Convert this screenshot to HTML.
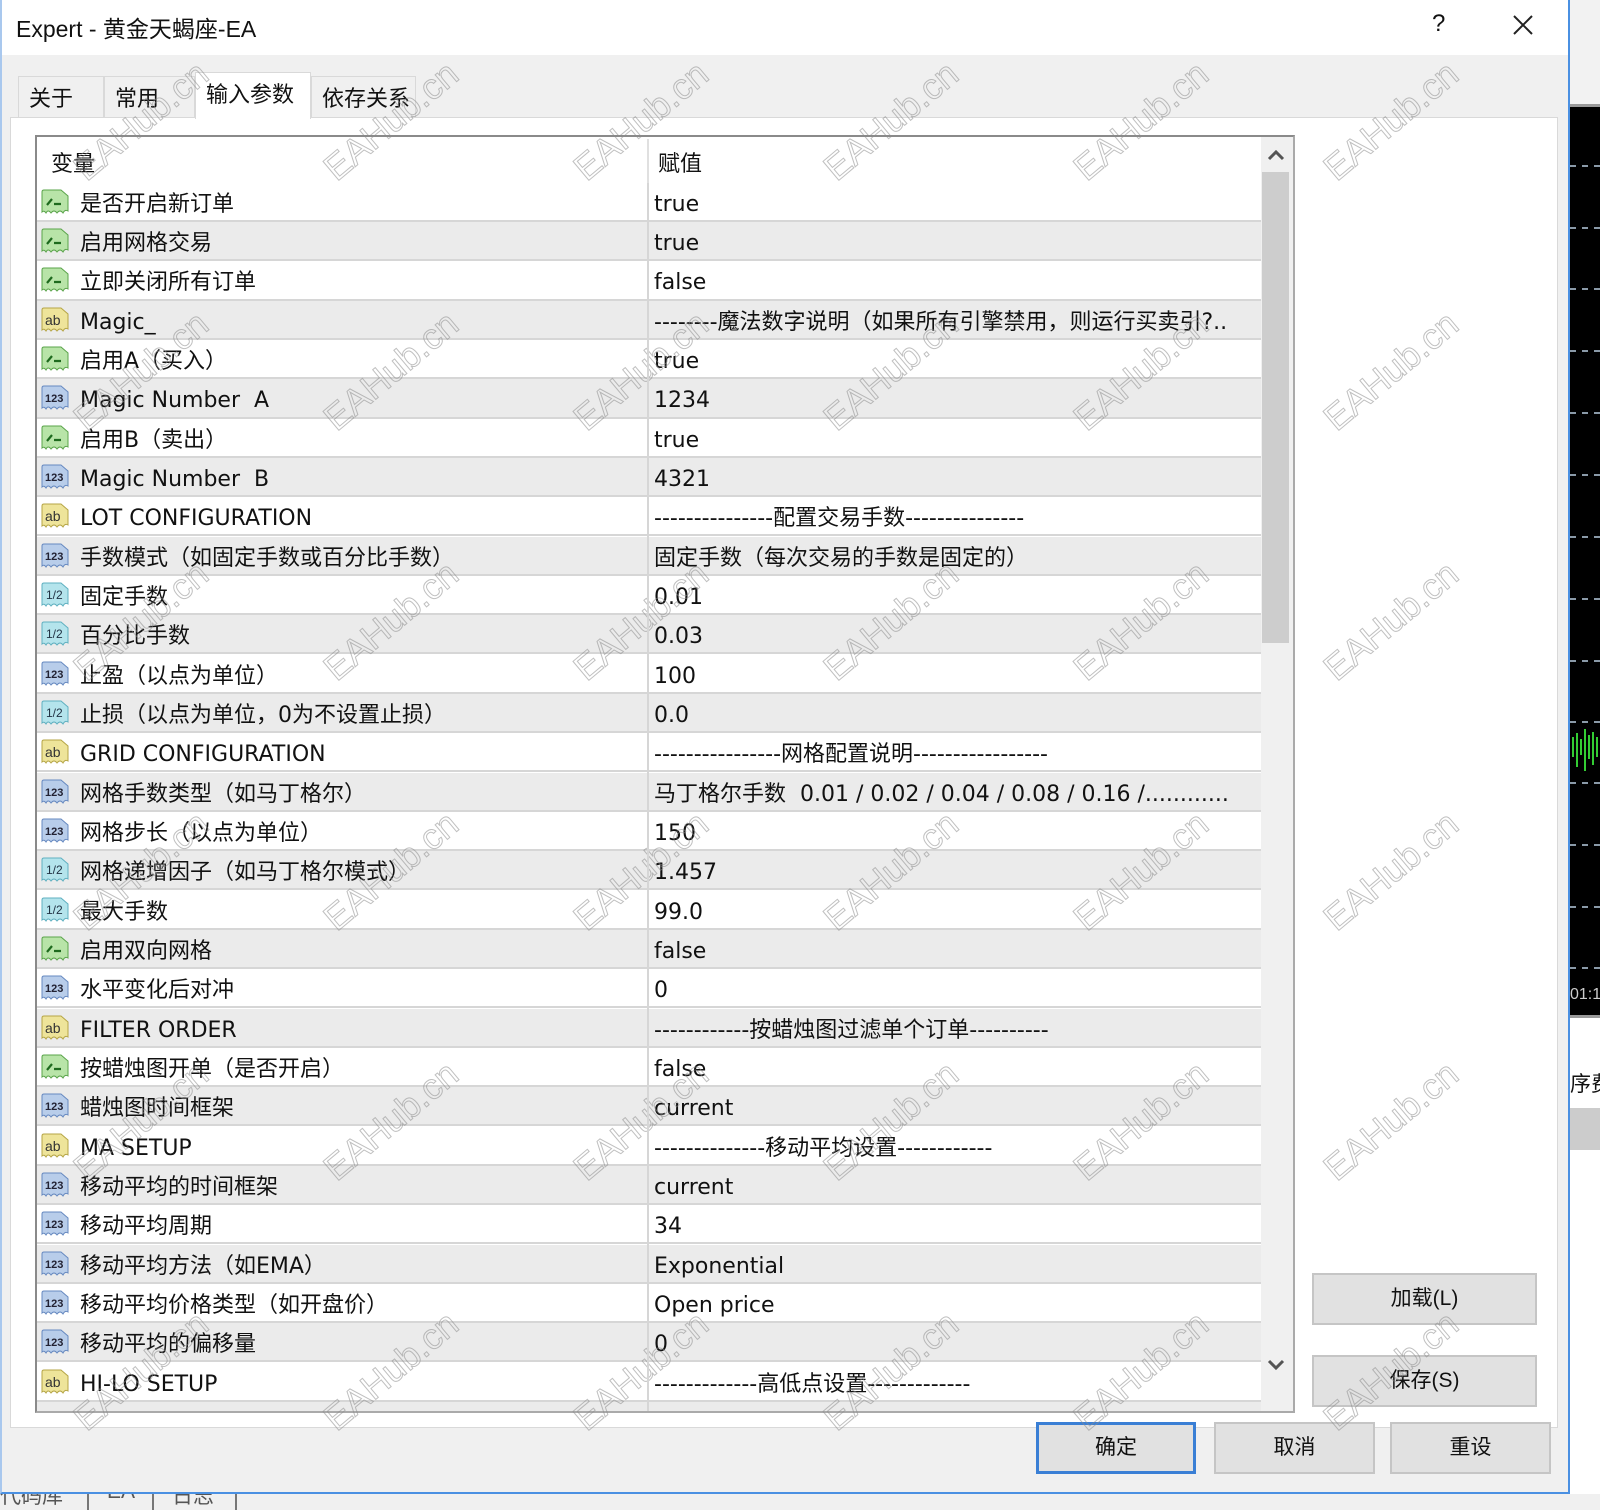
<!DOCTYPE html>
<html><head><meta charset="utf-8">
<style>
*{margin:0;padding:0;box-sizing:border-box}
html{overflow:hidden}
body{width:1600px;height:1510px;position:relative;overflow:hidden;background:#fff;font-family:"Liberation Sans","Noto Sans CJK SC",sans-serif;color:#111}
.a{position:absolute}
.tab{position:absolute;top:76px;height:42px;border:1px solid #d9d9d9;border-bottom:none;background:#f0f0f0;font-size:22px;padding:4px 0 0 10px}
.row{position:absolute;left:37px;width:1224px;height:39.33px;border-bottom:2px solid #d6d6d6;font-size:22px;font-family:"DejaVu Sans","Noto Sans CJK SC",sans-serif}
.row.g{background:#ebebeb}
.row .n,.row .v{position:absolute;top:6px;line-height:32px;height:32px;white-space:nowrap}
.row .n{left:43px}
.row .v{left:617px}
.row svg{position:absolute;left:4px;top:6px}
.wm{position:absolute;font:36px "Liberation Sans",sans-serif;color:transparent;-webkit-text-stroke:1px rgba(140,140,140,.55);transform:rotate(-40deg);white-space:nowrap}
.btn{position:absolute;background:#e1e1e1;border:2px solid #c5c5c5;font-size:21px;text-align:center}
</style></head><body>
<svg width="0" height="0" style="position:absolute">
<defs>
<path id="doc" d="M1 3 Q1 1 3 1 H20 L27 7 V22 Q24 20 22 24 Q19 20 16 24 Q13 20 10 24 Q7 20 5 24 Q3 21 1 23 Z"/>
</defs></svg>
<!-- right chart strip -->
<div class="a" style="left:1570px;top:0;width:30px;height:107px;background:#f2f2f2;border-bottom:3px solid #999"></div>
<div class="a" style="left:1570px;top:107px;width:30px;height:908px;background:#000"></div>
<div class="a" style="left:1570px;top:1015px;width:30px;height:3px;background:#999"></div>
<svg class="a" style="left:1570px;top:107px" width="30" height="908">
<g stroke="#8a9aa8" stroke-width="2" stroke-dasharray="6 6">
<line x1="0" y1="59" x2="30" y2="59"/><line x1="0" y1="121" x2="30" y2="121"/><line x1="0" y1="182" x2="30" y2="182"/><line x1="0" y1="244" x2="30" y2="244"/><line x1="0" y1="306" x2="30" y2="306"/><line x1="0" y1="368" x2="30" y2="368"/><line x1="0" y1="430" x2="30" y2="430"/><line x1="0" y1="492" x2="30" y2="492"/><line x1="0" y1="554" x2="30" y2="554"/><line x1="0" y1="615" x2="30" y2="615"/><line x1="0" y1="676" x2="30" y2="676"/><line x1="0" y1="738" x2="30" y2="738"/><line x1="0" y1="800" x2="30" y2="800"/><line x1="0" y1="861" x2="30" y2="861"/></g>
<g stroke="#3c3" stroke-width="2"><line x1="3" y1="630" x2="3" y2="650"/><line x1="7" y1="626" x2="7" y2="660"/><line x1="11" y1="632" x2="11" y2="648"/><line x1="15" y1="622" x2="15" y2="664"/><line x1="19" y1="628" x2="19" y2="652"/><line x1="23" y1="625" x2="23" y2="658"/><line x1="27" y1="630" x2="27" y2="650"/></g>
<text x="0" y="892" fill="#ccc" font-size="16" font-family="Liberation Sans">01:10</text>
</svg>
<div class="a" style="left:1570px;top:1068px;width:30px;height:30px;overflow:hidden;font-size:21px;white-space:nowrap">序费</div>
<div class="a" style="left:1570px;top:1108px;width:30px;height:42px;background:#ccc"></div>
<!-- bottom strip -->
<div class="a" style="left:0;top:1494px;width:1600px;height:16px;background:#f0f0f0;overflow:hidden">
<div class="a" style="left:0;top:-14px;font-size:21px;color:#555">代码库</div>
<div class="a" style="left:87px;top:0;width:2px;height:16px;background:#777"></div>
<div class="a" style="left:107px;top:-14px;font-size:21px;color:#555">EA</div>
<div class="a" style="left:152px;top:0;width:2px;height:16px;background:#777"></div>
<div class="a" style="left:172px;top:-14px;font-size:21px;color:#555">日志</div>
<div class="a" style="left:235px;top:0;width:2px;height:16px;background:#777"></div>
</div>
<!-- dialog -->
<div class="a" style="left:0;top:0;width:1570px;height:1494px;background:#f0f0f0;border-right:2px solid #4a90e2;border-bottom:2px solid #4a90e2;border-left:2px solid #a9c8ee"></div>
<div class="a" style="left:2px;top:0;width:1566px;height:55px;background:#fff"></div>
<div class="a" style="left:16px;top:10px;font-size:23px">Expert - 黄金天蝎座-EA</div>
<div class="a" style="left:1432px;top:10px;font-size:24px">?</div>
<svg class="a" style="left:1512px;top:14px" width="22" height="22"><path d="M2 2 L20 20 M20 2 L2 20" stroke="#222" stroke-width="2"/></svg>
<!-- tabs -->
<div class="tab" style="left:18px;width:86px">关于</div>
<div class="tab" style="left:104px;width:91px">常用</div>
<div class="tab" style="left:311px;width:105px">依存关系</div>
<div class="a" style="left:10px;top:117px;width:1548px;height:1311px;background:#fff;border:1px solid #d9d9d9"></div>
<div class="tab" style="left:195px;top:72px;width:116px;height:47px;background:#fff;border-color:#d9d9d9">输入参数</div>
<!-- table -->
<div class="a" style="left:35px;top:135px;width:1260px;height:1278px;border:2px solid #8a8a8a;border-right-color:#aaa;border-bottom-color:#aaa;background:#fff;overflow:hidden">
<div class="a" style="left:14px;top:9px;font-size:22px">变量</div>
<div class="a" style="left:610px;top:2px;width:2px;height:44px;background:#e0e0e0"></div>
<div class="a" style="left:621px;top:9px;font-size:22px">赋值</div>
<div class="a" style="left:610px;top:46px;width:2px;height:1240px;background:#d6d6d6;z-index:2"></div>
<div class="a" style="left:1224px;top:0;width:32px;height:1280px;background:#f0f0f0;z-index:3">
<svg class="a" style="left:6px;top:12px" width="18" height="12"><path d="M2 10 L9 3 L16 10" stroke="#555" stroke-width="3" fill="none"/></svg>
<div class="a" style="left:1px;top:35px;width:27px;height:471px;background:#cdcdcd"></div>
<svg class="a" style="left:6px;top:1222px" width="18" height="12"><path d="M2 2 L9 9 L16 2" stroke="#555" stroke-width="3" fill="none"/></svg>
</div>
<div class="a" style="left:-37px;top:-137px;width:1300px;height:1560px">
<div class="row" style="top:182.5px"><svg width="30" height="26"><use href="#doc" fill="#b8e4a8" stroke="#5aa44a"/><path d="M6 16 L11 10 M13 15 H20" stroke="#1e6a1e" stroke-width="2.2"/></svg><span class="n">是否开启新订单</span><span class="v">true</span></div>
<div class="row g" style="top:221.8px"><svg width="30" height="26"><use href="#doc" fill="#b8e4a8" stroke="#5aa44a"/><path d="M6 16 L11 10 M13 15 H20" stroke="#1e6a1e" stroke-width="2.2"/></svg><span class="n">启用网格交易</span><span class="v">true</span></div>
<div class="row" style="top:261.2px"><svg width="30" height="26"><use href="#doc" fill="#b8e4a8" stroke="#5aa44a"/><path d="M6 16 L11 10 M13 15 H20" stroke="#1e6a1e" stroke-width="2.2"/></svg><span class="n">立即关闭所有订单</span><span class="v">false</span></div>
<div class="row g" style="top:300.5px"><svg width="30" height="26"><use href="#doc" fill="#eee49a" stroke="#b5a545"/><text x="4" y="18" font-size="14" font-family="Liberation Sans" fill="#333">ab</text></svg><span class="n">Magic_</span><span class="v">--------魔法数字说明（如果所有引擎禁用，则运行买卖引?..</span></div>
<div class="row" style="top:339.8px"><svg width="30" height="26"><use href="#doc" fill="#b8e4a8" stroke="#5aa44a"/><path d="M6 16 L11 10 M13 15 H20" stroke="#1e6a1e" stroke-width="2.2"/></svg><span class="n">启用A（买入）</span><span class="v">true</span></div>
<div class="row g" style="top:379.2px"><svg width="30" height="26"><use href="#doc" fill="#b8cdea" stroke="#6689c0"/><text x="4" y="17" font-size="11" font-weight="bold" font-family="Liberation Sans" fill="#223">123</text></svg><span class="n">Magic Number&nbsp; A</span><span class="v">1234</span></div>
<div class="row" style="top:418.5px"><svg width="30" height="26"><use href="#doc" fill="#b8e4a8" stroke="#5aa44a"/><path d="M6 16 L11 10 M13 15 H20" stroke="#1e6a1e" stroke-width="2.2"/></svg><span class="n">启用B（卖出）</span><span class="v">true</span></div>
<div class="row g" style="top:457.8px"><svg width="30" height="26"><use href="#doc" fill="#b8cdea" stroke="#6689c0"/><text x="4" y="17" font-size="11" font-weight="bold" font-family="Liberation Sans" fill="#223">123</text></svg><span class="n">Magic Number&nbsp; B</span><span class="v">4321</span></div>
<div class="row" style="top:497.1px"><svg width="30" height="26"><use href="#doc" fill="#eee49a" stroke="#b5a545"/><text x="4" y="18" font-size="14" font-family="Liberation Sans" fill="#333">ab</text></svg><span class="n">LOT CONFIGURATION</span><span class="v">---------------配置交易手数---------------</span></div>
<div class="row g" style="top:536.5px"><svg width="30" height="26"><use href="#doc" fill="#b8cdea" stroke="#6689c0"/><text x="4" y="17" font-size="11" font-weight="bold" font-family="Liberation Sans" fill="#223">123</text></svg><span class="n">手数模式（如固定手数或百分比手数）</span><span class="v">固定手数（每次交易的手数是固定的）</span></div>
<div class="row" style="top:575.8px"><svg width="30" height="26"><use href="#doc" fill="#b4e4ec" stroke="#5fb0c0"/><text x="5" y="17" font-size="12" font-family="Liberation Sans" fill="#234">1/2</text></svg><span class="n">固定手数</span><span class="v">0.01</span></div>
<div class="row g" style="top:615.1px"><svg width="30" height="26"><use href="#doc" fill="#b4e4ec" stroke="#5fb0c0"/><text x="5" y="17" font-size="12" font-family="Liberation Sans" fill="#234">1/2</text></svg><span class="n">百分比手数</span><span class="v">0.03</span></div>
<div class="row" style="top:654.5px"><svg width="30" height="26"><use href="#doc" fill="#b8cdea" stroke="#6689c0"/><text x="4" y="17" font-size="11" font-weight="bold" font-family="Liberation Sans" fill="#223">123</text></svg><span class="n">止盈（以点为单位）</span><span class="v">100</span></div>
<div class="row g" style="top:693.8px"><svg width="30" height="26"><use href="#doc" fill="#b4e4ec" stroke="#5fb0c0"/><text x="5" y="17" font-size="12" font-family="Liberation Sans" fill="#234">1/2</text></svg><span class="n">止损（以点为单位，0为不设置止损）</span><span class="v">0.0</span></div>
<div class="row" style="top:733.1px"><svg width="30" height="26"><use href="#doc" fill="#eee49a" stroke="#b5a545"/><text x="4" y="18" font-size="14" font-family="Liberation Sans" fill="#333">ab</text></svg><span class="n">GRID CONFIGURATION</span><span class="v">----------------网格配置说明-----------------</span></div>
<div class="row g" style="top:772.5px"><svg width="30" height="26"><use href="#doc" fill="#b8cdea" stroke="#6689c0"/><text x="4" y="17" font-size="11" font-weight="bold" font-family="Liberation Sans" fill="#223">123</text></svg><span class="n">网格手数类型（如马丁格尔）</span><span class="v">马丁格尔手数&nbsp; 0.01 / 0.02 / 0.04 / 0.08 / 0.16 /............</span></div>
<div class="row" style="top:811.8px"><svg width="30" height="26"><use href="#doc" fill="#b8cdea" stroke="#6689c0"/><text x="4" y="17" font-size="11" font-weight="bold" font-family="Liberation Sans" fill="#223">123</text></svg><span class="n">网格步长（以点为单位）</span><span class="v">150</span></div>
<div class="row g" style="top:851.1px"><svg width="30" height="26"><use href="#doc" fill="#b4e4ec" stroke="#5fb0c0"/><text x="5" y="17" font-size="12" font-family="Liberation Sans" fill="#234">1/2</text></svg><span class="n">网格递增因子（如马丁格尔模式）</span><span class="v">1.457</span></div>
<div class="row" style="top:890.5px"><svg width="30" height="26"><use href="#doc" fill="#b4e4ec" stroke="#5fb0c0"/><text x="5" y="17" font-size="12" font-family="Liberation Sans" fill="#234">1/2</text></svg><span class="n">最大手数</span><span class="v">99.0</span></div>
<div class="row g" style="top:929.8px"><svg width="30" height="26"><use href="#doc" fill="#b8e4a8" stroke="#5aa44a"/><path d="M6 16 L11 10 M13 15 H20" stroke="#1e6a1e" stroke-width="2.2"/></svg><span class="n">启用双向网格</span><span class="v">false</span></div>
<div class="row" style="top:969.1px"><svg width="30" height="26"><use href="#doc" fill="#b8cdea" stroke="#6689c0"/><text x="4" y="17" font-size="11" font-weight="bold" font-family="Liberation Sans" fill="#223">123</text></svg><span class="n">水平变化后对冲</span><span class="v">0</span></div>
<div class="row g" style="top:1008.5px"><svg width="30" height="26"><use href="#doc" fill="#eee49a" stroke="#b5a545"/><text x="4" y="18" font-size="14" font-family="Liberation Sans" fill="#333">ab</text></svg><span class="n">FILTER ORDER</span><span class="v">------------按蜡烛图过滤单个订单----------</span></div>
<div class="row" style="top:1047.8px"><svg width="30" height="26"><use href="#doc" fill="#b8e4a8" stroke="#5aa44a"/><path d="M6 16 L11 10 M13 15 H20" stroke="#1e6a1e" stroke-width="2.2"/></svg><span class="n">按蜡烛图开单（是否开启）</span><span class="v">false</span></div>
<div class="row g" style="top:1087.1px"><svg width="30" height="26"><use href="#doc" fill="#b8cdea" stroke="#6689c0"/><text x="4" y="17" font-size="11" font-weight="bold" font-family="Liberation Sans" fill="#223">123</text></svg><span class="n">蜡烛图时间框架</span><span class="v">current</span></div>
<div class="row" style="top:1126.5px"><svg width="30" height="26"><use href="#doc" fill="#eee49a" stroke="#b5a545"/><text x="4" y="18" font-size="14" font-family="Liberation Sans" fill="#333">ab</text></svg><span class="n">MA SETUP</span><span class="v">--------------移动平均设置------------</span></div>
<div class="row g" style="top:1165.8px"><svg width="30" height="26"><use href="#doc" fill="#b8cdea" stroke="#6689c0"/><text x="4" y="17" font-size="11" font-weight="bold" font-family="Liberation Sans" fill="#223">123</text></svg><span class="n">移动平均的时间框架</span><span class="v">current</span></div>
<div class="row" style="top:1205.1px"><svg width="30" height="26"><use href="#doc" fill="#b8cdea" stroke="#6689c0"/><text x="4" y="17" font-size="11" font-weight="bold" font-family="Liberation Sans" fill="#223">123</text></svg><span class="n">移动平均周期</span><span class="v">34</span></div>
<div class="row g" style="top:1244.5px"><svg width="30" height="26"><use href="#doc" fill="#b8cdea" stroke="#6689c0"/><text x="4" y="17" font-size="11" font-weight="bold" font-family="Liberation Sans" fill="#223">123</text></svg><span class="n">移动平均方法（如EMA）</span><span class="v">Exponential</span></div>
<div class="row" style="top:1283.8px"><svg width="30" height="26"><use href="#doc" fill="#b8cdea" stroke="#6689c0"/><text x="4" y="17" font-size="11" font-weight="bold" font-family="Liberation Sans" fill="#223">123</text></svg><span class="n">移动平均价格类型（如开盘价）</span><span class="v">Open price</span></div>
<div class="row g" style="top:1323.1px"><svg width="30" height="26"><use href="#doc" fill="#b8cdea" stroke="#6689c0"/><text x="4" y="17" font-size="11" font-weight="bold" font-family="Liberation Sans" fill="#223">123</text></svg><span class="n">移动平均的偏移量</span><span class="v">0</span></div>
<div class="row" style="top:1362.5px"><svg width="30" height="26"><use href="#doc" fill="#eee49a" stroke="#b5a545"/><text x="4" y="18" font-size="14" font-family="Liberation Sans" fill="#333">ab</text></svg><span class="n">HI-LO SETUP</span><span class="v">-------------高低点设置-------------</span></div>
<div class="row g" style="top:1401.8px"></div>
</div>
</div>
<!-- buttons -->
<div class="btn" style="left:1312px;top:1273px;width:225px;height:52px;line-height:47px">加载(L)</div>
<div class="btn" style="left:1312px;top:1355px;width:225px;height:52px;line-height:47px">保存(S)</div>
<div class="btn" style="left:1036px;top:1422px;width:160px;height:52px;line-height:46px;border:3px solid #3a7fd5">确定</div>
<div class="btn" style="left:1214px;top:1422px;width:161px;height:52px;line-height:47px">取消</div>
<div class="btn" style="left:1390px;top:1422px;width:161px;height:52px;line-height:47px">重设</div>
<!-- watermarks -->
<div class="wm" style="left:60px;top:100px">EAHub.cn</div><div class="wm" style="left:310px;top:100px">EAHub.cn</div><div class="wm" style="left:560px;top:100px">EAHub.cn</div><div class="wm" style="left:810px;top:100px">EAHub.cn</div><div class="wm" style="left:1060px;top:100px">EAHub.cn</div><div class="wm" style="left:1310px;top:100px">EAHub.cn</div>
<div class="wm" style="left:60px;top:350px">EAHub.cn</div><div class="wm" style="left:310px;top:350px">EAHub.cn</div><div class="wm" style="left:560px;top:350px">EAHub.cn</div><div class="wm" style="left:810px;top:350px">EAHub.cn</div><div class="wm" style="left:1060px;top:350px">EAHub.cn</div><div class="wm" style="left:1310px;top:350px">EAHub.cn</div>
<div class="wm" style="left:60px;top:600px">EAHub.cn</div><div class="wm" style="left:310px;top:600px">EAHub.cn</div><div class="wm" style="left:560px;top:600px">EAHub.cn</div><div class="wm" style="left:810px;top:600px">EAHub.cn</div><div class="wm" style="left:1060px;top:600px">EAHub.cn</div><div class="wm" style="left:1310px;top:600px">EAHub.cn</div>
<div class="wm" style="left:60px;top:850px">EAHub.cn</div><div class="wm" style="left:310px;top:850px">EAHub.cn</div><div class="wm" style="left:560px;top:850px">EAHub.cn</div><div class="wm" style="left:810px;top:850px">EAHub.cn</div><div class="wm" style="left:1060px;top:850px">EAHub.cn</div><div class="wm" style="left:1310px;top:850px">EAHub.cn</div>
<div class="wm" style="left:60px;top:1100px">EAHub.cn</div><div class="wm" style="left:310px;top:1100px">EAHub.cn</div><div class="wm" style="left:560px;top:1100px">EAHub.cn</div><div class="wm" style="left:810px;top:1100px">EAHub.cn</div><div class="wm" style="left:1060px;top:1100px">EAHub.cn</div><div class="wm" style="left:1310px;top:1100px">EAHub.cn</div>
<div class="wm" style="left:60px;top:1350px">EAHub.cn</div><div class="wm" style="left:310px;top:1350px">EAHub.cn</div><div class="wm" style="left:560px;top:1350px">EAHub.cn</div><div class="wm" style="left:810px;top:1350px">EAHub.cn</div><div class="wm" style="left:1060px;top:1350px">EAHub.cn</div><div class="wm" style="left:1310px;top:1350px">EAHub.cn</div>
</body></html>
